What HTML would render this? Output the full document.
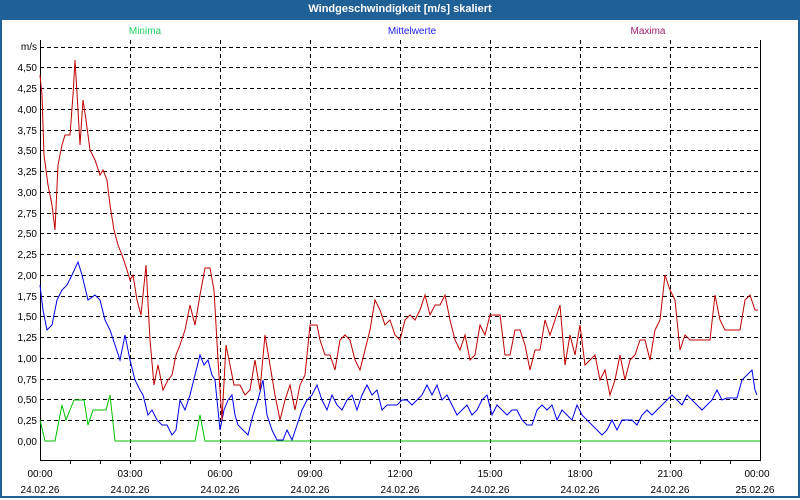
<!DOCTYPE html>
<html><head><style>
body{margin:0;width:800px;height:500px;overflow:hidden;background:#fff;font-family:"Liberation Sans","DejaVu Sans",sans-serif;}
.frame{position:absolute;left:0;top:0;width:796px;height:496px;border:2px solid #1f6096;border-top:none;}
.title{position:absolute;left:0;top:0;width:800px;height:20px;background:#1f6096;color:#fff;font-weight:bold;font-size:11px;text-align:center;line-height:19px;}
</style></head><body>
<div class="frame"></div>
<div class="title">Windgeschwindigkeit [m/s] skaliert</div>
<svg width="800" height="500" style="position:absolute;left:0;top:0" font-family="Liberation Sans, DejaVu Sans, sans-serif" font-size="10">
<text x="145" y="34" fill="#20d060" text-anchor="middle">Minima</text>
<text x="412" y="34" fill="#2020ff" text-anchor="middle">Mittelwerte</text>
<text x="648" y="34" fill="#a02070" text-anchor="middle">Maxima</text>
<g stroke="#000" stroke-dasharray="4,3" stroke-width="1">
<line x1="40" x2="760" y1="47.5" y2="47.5"/><line x1="40" x2="760" y1="67.5" y2="67.5"/><line x1="40" x2="760" y1="88.5" y2="88.5"/><line x1="40" x2="760" y1="109.5" y2="109.5"/><line x1="40" x2="760" y1="130.5" y2="130.5"/><line x1="40" x2="760" y1="150.5" y2="150.5"/><line x1="40" x2="760" y1="171.5" y2="171.5"/><line x1="40" x2="760" y1="192.5" y2="192.5"/><line x1="40" x2="760" y1="213.5" y2="213.5"/><line x1="40" x2="760" y1="233.5" y2="233.5"/><line x1="40" x2="760" y1="254.5" y2="254.5"/><line x1="40" x2="760" y1="275.5" y2="275.5"/><line x1="40" x2="760" y1="296.5" y2="296.5"/><line x1="40" x2="760" y1="316.5" y2="316.5"/><line x1="40" x2="760" y1="337.5" y2="337.5"/><line x1="40" x2="760" y1="358.5" y2="358.5"/><line x1="40" x2="760" y1="379.5" y2="379.5"/><line x1="40" x2="760" y1="399.5" y2="399.5"/><line x1="40" x2="760" y1="420.5" y2="420.5"/>
<line y1="40" y2="460" x1="130.5" x2="130.5"/><line y1="40" y2="460" x1="220.5" x2="220.5"/><line y1="40" y2="460" x1="310.5" x2="310.5"/><line y1="40" y2="460" x1="400.5" x2="400.5"/><line y1="40" y2="460" x1="490.5" x2="490.5"/><line y1="40" y2="460" x1="580.5" x2="580.5"/><line y1="40" y2="460" x1="670.5" x2="670.5"/>
</g>
<polyline fill="none" stroke="#000" points="40.5,40 40.5,460.5 760.5,460.5 760.5,40"/>
<g stroke="#000"><line x1="70.5" x2="70.5" y1="460" y2="464"/><line x1="100.5" x2="100.5" y1="460" y2="464"/><line x1="130.5" x2="130.5" y1="460" y2="464"/><line x1="160.5" x2="160.5" y1="460" y2="464"/><line x1="190.5" x2="190.5" y1="460" y2="464"/><line x1="220.5" x2="220.5" y1="460" y2="464"/><line x1="250.5" x2="250.5" y1="460" y2="464"/><line x1="280.5" x2="280.5" y1="460" y2="464"/><line x1="310.5" x2="310.5" y1="460" y2="464"/><line x1="340.5" x2="340.5" y1="460" y2="464"/><line x1="370.5" x2="370.5" y1="460" y2="464"/><line x1="400.5" x2="400.5" y1="460" y2="464"/><line x1="430.5" x2="430.5" y1="460" y2="464"/><line x1="460.5" x2="460.5" y1="460" y2="464"/><line x1="490.5" x2="490.5" y1="460" y2="464"/><line x1="520.5" x2="520.5" y1="460" y2="464"/><line x1="550.5" x2="550.5" y1="460" y2="464"/><line x1="580.5" x2="580.5" y1="460" y2="464"/><line x1="610.5" x2="610.5" y1="460" y2="464"/><line x1="640.5" x2="640.5" y1="460" y2="464"/><line x1="670.5" x2="670.5" y1="460" y2="464"/><line x1="700.5" x2="700.5" y1="460" y2="464"/><line x1="730.5" x2="730.5" y1="460" y2="464"/></g>
<g text-anchor="end" fill="#000">
<text x="37" y="50">m/s</text><text x="37" y="71">4,50</text><text x="37" y="92">4,25</text><text x="37" y="113">4,00</text><text x="37" y="134">3,75</text><text x="37" y="154">3,50</text><text x="37" y="175">3,25</text><text x="37" y="196">3,00</text><text x="37" y="217">2,75</text><text x="37" y="237">2,50</text><text x="37" y="258">2,25</text><text x="37" y="279">2,00</text><text x="37" y="300">1,75</text><text x="37" y="320">1,50</text><text x="37" y="341">1,25</text><text x="37" y="362">1,00</text><text x="37" y="383">0,75</text><text x="37" y="403">0,50</text><text x="37" y="424">0,25</text><text x="37" y="445">0,00</text>
</g>
<g text-anchor="middle" fill="#000">
<text x="40" y="477">00:00</text><text x="130" y="477">03:00</text><text x="220" y="477">06:00</text><text x="310" y="477">09:00</text><text x="400" y="477">12:00</text><text x="490" y="477">15:00</text><text x="580" y="477">18:00</text><text x="670" y="477">21:00</text><text x="757" y="477">00:00</text>
<text x="40" y="493">24.02.26</text><text x="130" y="493">24.02.26</text><text x="220" y="493">24.02.26</text><text x="310" y="493">24.02.26</text><text x="400" y="493">24.02.26</text><text x="490" y="493">24.02.26</text><text x="580" y="493">24.02.26</text><text x="670" y="493">24.02.26</text><text x="755" y="493">25.02.26</text>
</g>
<polyline fill="none" stroke="#00c000" points="40,420 45,441 55,441 62,405 66,420 70,410 74,400 80,400 84,400 88,425 93,410 100,410 106,410 110,395 115,441 195,441 200,415 205,441 760,441"/>
<polyline fill="none" stroke="#0000ee" points="40,285 43,310 47,330 52,325 57,300 62,290 67,285 72,275 78,262 82,275 88,300 95,295 100,300 105,320 110,330 115,345 120,360 125,335 130,360 135,380 140,390 143,395 148,415 152,410 157,420 162,425 167,425 172,435 176,430 180,400 185,410 190,395 195,375 200,355 204,365 208,360 212,375 215,380 220,430 224,410 228,400 232,395 235,415 238,425 243,430 248,435 253,415 258,400 263,380 267,415 272,430 277,440 283,440 287,430 292,440 297,425 302,410 307,400 312,395 317,385 322,400 327,410 332,395 337,405 342,410 347,400 352,395 357,410 362,395 367,385 372,395 377,390 382,410 387,405 392,405 397,405 402,400 407,400 412,405 417,400 422,395 427,385 432,395 437,385 442,400 447,395 452,405 457,415 462,410 467,405 472,415 477,410 482,400 487,395 492,415 497,405 502,410 507,415 512,410 517,410 522,420 527,425 532,425 537,410 542,405 547,410 552,405 557,420 562,410 567,415 572,420 577,405 582,415 587,420 592,425 597,430 602,435 607,430 612,420 617,430 622,420 627,420 632,420 637,425 642,415 647,410 652,415 657,410 662,405 667,400 672,395 677,400 682,405 687,395 692,400 697,405 702,410 707,405 712,400 717,390 722,400 727,398 732,398 737,398 742,380 747,375 752,370 755,390 757,395"/>
<polyline fill="none" stroke="#c00000" points="40,75 42,95 44,155 48,185 52,205 55,230 58,165 62,145 65,135 70,135 73,95 75,60 78,110 80,145 83,100 86,120 90,150 95,160 100,175 103,170 107,180 110,205 114,230 118,245 122,255 127,270 130,280 133,275 137,300 141,315 146,265 150,340 154,385 158,365 163,390 168,380 172,375 176,355 180,345 185,330 190,305 195,325 200,295 205,268 210,268 214,290 218,360 222,420 226,345 230,365 234,385 240,385 245,395 250,390 255,360 260,390 265,335 270,365 275,395 280,420 285,400 290,385 295,410 300,385 305,375 310,325 317,325 320,340 325,355 330,355 335,370 340,340 345,335 350,340 355,360 360,370 365,350 370,330 375,300 380,310 385,325 390,320 395,335 400,340 405,320 410,315 415,320 420,310 425,295 430,315 435,305 440,305 445,295 450,320 455,340 460,350 465,335 470,360 475,355 480,325 485,335 490,315 495,315 500,315 505,355 510,355 515,330 520,330 525,345 530,370 535,350 540,350 545,320 550,335 555,320 560,305 565,365 570,335 575,355 580,325 585,365 590,360 595,355 600,380 605,370 610,395 615,380 620,355 625,380 630,360 635,355 640,340 645,340 650,360 655,330 660,320 665,275 670,290 675,300 680,350 685,335 690,340 695,340 700,340 705,340 710,340 715,295 720,320 725,330 730,330 735,330 740,330 745,300 750,295 755,310 758,310"/>
</svg>
</body></html>
